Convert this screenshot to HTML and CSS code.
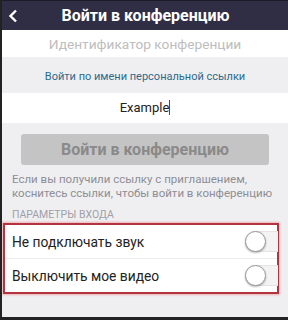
FILE: index.html
```html
<!DOCTYPE html>
<html lang="ru">
<head>
    <meta charset="UTF-8">
    <title>Войти в конференцию</title>
    <link rel="stylesheet" href="styles.css">
</head>
<body>

<div class="screen">
    <div class="topbar">
        <svg class="back" width="10" height="14" viewBox="0 0 10 14"><path d="M8 1.5 L2.5 7 L8 12.5" fill="none" stroke="#fff" stroke-width="2.4"/></svg>
        <span class="title">Войти в конференцию</span>
    </div>

    <div class="field placeholder">Идентификатор конференции</div>
    <div class="link-row"><span class="link">Войти по имени персональной ссылки</span></div>
    <div class="field name">Example<span class="cursor"></span></div>

    <div class="btn-wrap"><div class="btn">Войти в конференцию</div></div>

    <p class="hint">Если вы получили ссылку с приглашением,<br>коснитесь ссылки, чтобы войти в конференцию</p>

    <div class="section">ПАРАМЕТРЫ ВХОДА</div>

    <div class="options">
        <div class="option">
            <span>Не подключать звук</span>
            <span class="toggle"><span class="knob"></span></span>
        </div>
        <div class="option">
            <span>Выключить мое видео</span>
            <span class="toggle"><span class="knob"></span></span>
        </div>
    </div>
</div>

</body>
</html>
```

FILE: styles.css
```css
body { margin: 0; background: #222; font-family: Roboto, "Liberation Sans", sans-serif; }
.screen { width: 286px; height: 317px; margin-left: 2px; background: #efeff2; overflow: hidden; }
.topbar { height: 30px; background: #2f2e45; border-top: 1px solid #1b1a28; box-sizing: border-box; display: flex; align-items: center; justify-content: center; position: relative; }
.back { position: absolute; left: 6px; top: 8px; }
.title { color: #fff; font-size: 16px; font-weight: bold; margin-left: 1px; }
.field { background: #fff; text-align: center; }
.placeholder { height: 27px; line-height: 28px; font-size: 13.7px; color: #bdbdbd; }
.link-row { height: 36px; display: flex; align-items: center; justify-content: center; padding-top: 2px; box-sizing: border-box; }
.link { color: #2b6a8e; font-size: 11px; }
.name { height: 30px; line-height: 30px; font-size: 13px; color: #222; }
.cursor { display: inline-block; width: 1px; height: 15px; background: #1a5a8a; vertical-align: -3px; }
.btn-wrap { padding: 11px 19px 0 19px; }
.btn { height: 31px; line-height: 31px; background: #c4c4c4; border-radius: 3px; text-align: center; color: #8a8a8a; font-size: 16px; font-weight: bold; }
.hint { margin: 7px 0 0 0; padding-left: 10px; font-size: 11.5px; line-height: 14px; color: #8e8e93; }
.section { margin-top: 8px; padding-left: 10px; font-size: 10.5px; color: #a0a0a5; }
.options { margin: 2px 0 0 1px; width: 276px; border: 2px solid #b3343f; box-shadow: 0 0 2px 1px #f0b0b5; background: #fff; box-sizing: border-box; }
.option { height: 33px; display: flex; align-items: center; justify-content: space-between; padding-left: 7px; font-size: 13.8px; color: #222; }
.option + .option { border-top: 1px solid #ececec; }
.toggle { width: 32px; height: 19px; border-radius: 10px 0 0 10px; background: #f3f3f3; border: 1px solid #e4e4e4; border-right: none; position: relative; margin-right: -1px; }
.knob { position: absolute; left: -1px; top: -1px; width: 19px; height: 19px; border-radius: 50%; background: #fff; border: 1px solid #9a9a9a; box-shadow: 0 1px 2px rgba(0,0,0,0.3); }
```
